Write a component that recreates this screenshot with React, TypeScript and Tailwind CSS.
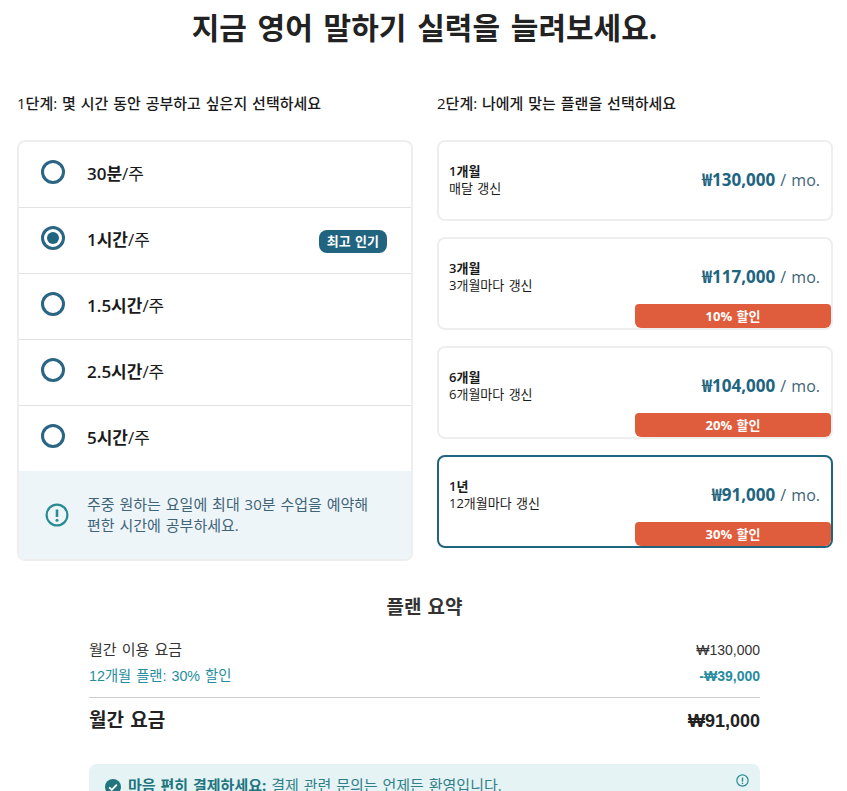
import React from "react";

const kr = "font-['Open_Sans','Noto_Sans_CJK_KR',sans-serif]";
const arial = "font-['Liberation_Sans','Noto_Sans_CJK_KR',sans-serif]";

const hours = [
  { bold: "30분", popular: false },
  { bold: "1시간", popular: true },
  { bold: "1.5시간", popular: false },
  { bold: "2.5시간", popular: false },
  { bold: "5시간", popular: false },
];

const plans = [
  { name: "1개월", renew: "매달 갱신", price: "₩130,000", off: "" },
  { name: "3개월", renew: "3개월마다 갱신", price: "₩117,000", off: "10% 할인" },
  { name: "6개월", renew: "6개월마다 갱신", price: "₩104,000", off: "20% 할인" },
  { name: "1년", renew: "12개월마다 갱신", price: "₩91,000", off: "30% 할인" },
];

const Radio = ({ on }: { on: boolean }) => (
  <span className="flex h-6 w-6 shrink-0 items-center justify-center rounded-full border-[3px] border-[#2a6585]">
    {on && <span className="h-3 w-3 rounded-full bg-[#20647f]" />}
  </span>
);

const AlertIcon = ({ className }: { className: string }) => (
  <svg viewBox="0 0 24 24" fill="none" stroke="currentColor" strokeWidth="2.2" className={className}>
    <circle cx="12" cy="12" r="10.4" />
    <path d="M12 6.5v7.5" strokeWidth="2.6" />
    <circle cx="12" cy="17.3" r="1.5" fill="currentColor" stroke="none" />
  </svg>
);

const App = () => {
  return (
    <div className={`h-[791px] overflow-hidden bg-white text-[#1a1a1a] [word-spacing:1px] ${kr}`}>
      <h1 className="pl-[2px] pt-[6px] text-center text-[30px] font-bold leading-[44px] text-[#222] [word-spacing:3px]">
        지금 영어 말하기 실력을 늘려보세요.
      </h1>

      <div className="mt-[43px] grid grid-cols-[396px_396px] gap-x-6 px-[17px]">
        <div>
          <h2 className="text-[15px] font-medium leading-5">1단계: 몇 시간 동안 공부하고 싶은지 선택하세요</h2>
          <div className="mt-[27px] overflow-hidden rounded-lg border-2 border-[#eeeeee]">
            {hours.map((h, i) => (
              <div
                key={h.bold}
                className={`flex items-start pl-[22px] pr-6 ${i > 0 ? "h-[66px] border-t border-[#e3e3e3] pt-[18px]" : "h-[65px] pt-[18px]"}`}
              >
                <Radio on={h.popular} />
                <span className="ml-[22px] mt-[2px] text-[17px] leading-6">
                  <b className="font-semibold">{h.bold}</b>/주
                </span>
                {h.popular && (
                  <span className="ml-auto mt-[4px] rounded-lg bg-[#20647f] px-2 text-[13px] font-bold leading-[23px] text-white">
                    최고 인기
                  </span>
                )}
              </div>
            ))}
            <div className="flex h-[88px] items-center bg-[#eef5f9] pl-[26px] pr-6 text-[15px] leading-[21px] text-[#3f6478]">
              <AlertIcon className="h-6 w-6 shrink-0 text-[#288c93]" />
              <p className="ml-[18px]">
                주중 원하는 요일에 최대 30분 수업을 예약해
                <br />
                편한 시간에 공부하세요.
              </p>
            </div>
          </div>
        </div>

        <div>
          <h2 className="text-[15px] font-medium leading-5">2단계: 나에게 맞는 플랜을 선택하세요</h2>
          <div className="mt-[27px] flex flex-col gap-4">
            {plans.map((p, i) => (
              <div
                key={p.name}
                className={`relative flex items-start justify-between rounded-lg border-2 pl-[10px] pr-[11px] pt-[21px] ${
                  i === 3 ? "border-[#20647f]" : "border-[#eeeeee]"
                } ${p.off ? "h-[93px]" : "h-[81px]"}`}
              >
                <div className="text-[13px] leading-[17px]">
                  <div className="font-semibold">{p.name}</div>
                  <div>{p.renew}</div>
                </div>
                <div className="mt-[5px] text-base leading-[24px] text-[#3f6478]">
                  <b className="text-[17px] font-bold text-[#20647f]">{p.price}</b> / mo.
                </div>
                {p.off && (
                  <div className="absolute bottom-0 right-0 w-[196px] rounded-t-[4px] rounded-b-[6px] bg-[#df5d3d] text-center text-[13px] font-bold leading-6 text-white">
                    {p.off}
                  </div>
                )}
              </div>
            ))}
          </div>
        </div>
      </div>

      <div className="ml-[89px] mt-[32px] w-[671px]">
        <h3 className="text-center text-[19px] font-semibold leading-7 text-[#333]">플랜 요약</h3>
        <div className={`mt-[16px] text-sm ${arial}`}>
          <div className="flex h-[26px] items-center justify-between text-[#333]">
            <span className="text-[15px]">월간 이용 요금</span>
            <span>₩130,000</span>
          </div>
          <div className="flex h-[26px] items-center justify-between text-[#288c9e]">
            <span className="text-[14.3px]">12개월 플랜: 30% 할인</span>
            <b>-₩39,000</b>
          </div>
          <div className="mt-[8px] flex h-[46px] items-start justify-between border-t border-[#cccccc] pt-[11px] text-lg font-bold leading-6 text-[#222]">
            <span className="text-[19px]">월간 요금</span>
            <span>₩91,000</span>
          </div>
        </div>
        <div className={`relative mt-[21px] flex h-[60px] items-start rounded-t-lg bg-[#e6f3f4] pl-4 pt-[11px] text-[15px] leading-5 text-[#2f7f88] ${kr}`}>
          <svg viewBox="0 0 16 16" className="mr-[7px] mt-[4px] h-4 w-4 shrink-0">
            <circle cx="8" cy="8" r="8" fill="#20757f" />
            <path d="M4.2 8.3l2.6 2.6 5-5.2" fill="none" stroke="#fff" strokeWidth="1.8" />
          </svg>
          <p>
            <b className="font-bold text-[#20757f]">마음 편히 결제하세요:</b> 결제 관련 문의는 언제든 환영입니다.
          </p>
          <AlertIcon className="absolute right-[11px] top-[10px] h-[13px] w-[13px] text-[#288c93]" />
        </div>
      </div>
    </div>
  );
};

export default App;
